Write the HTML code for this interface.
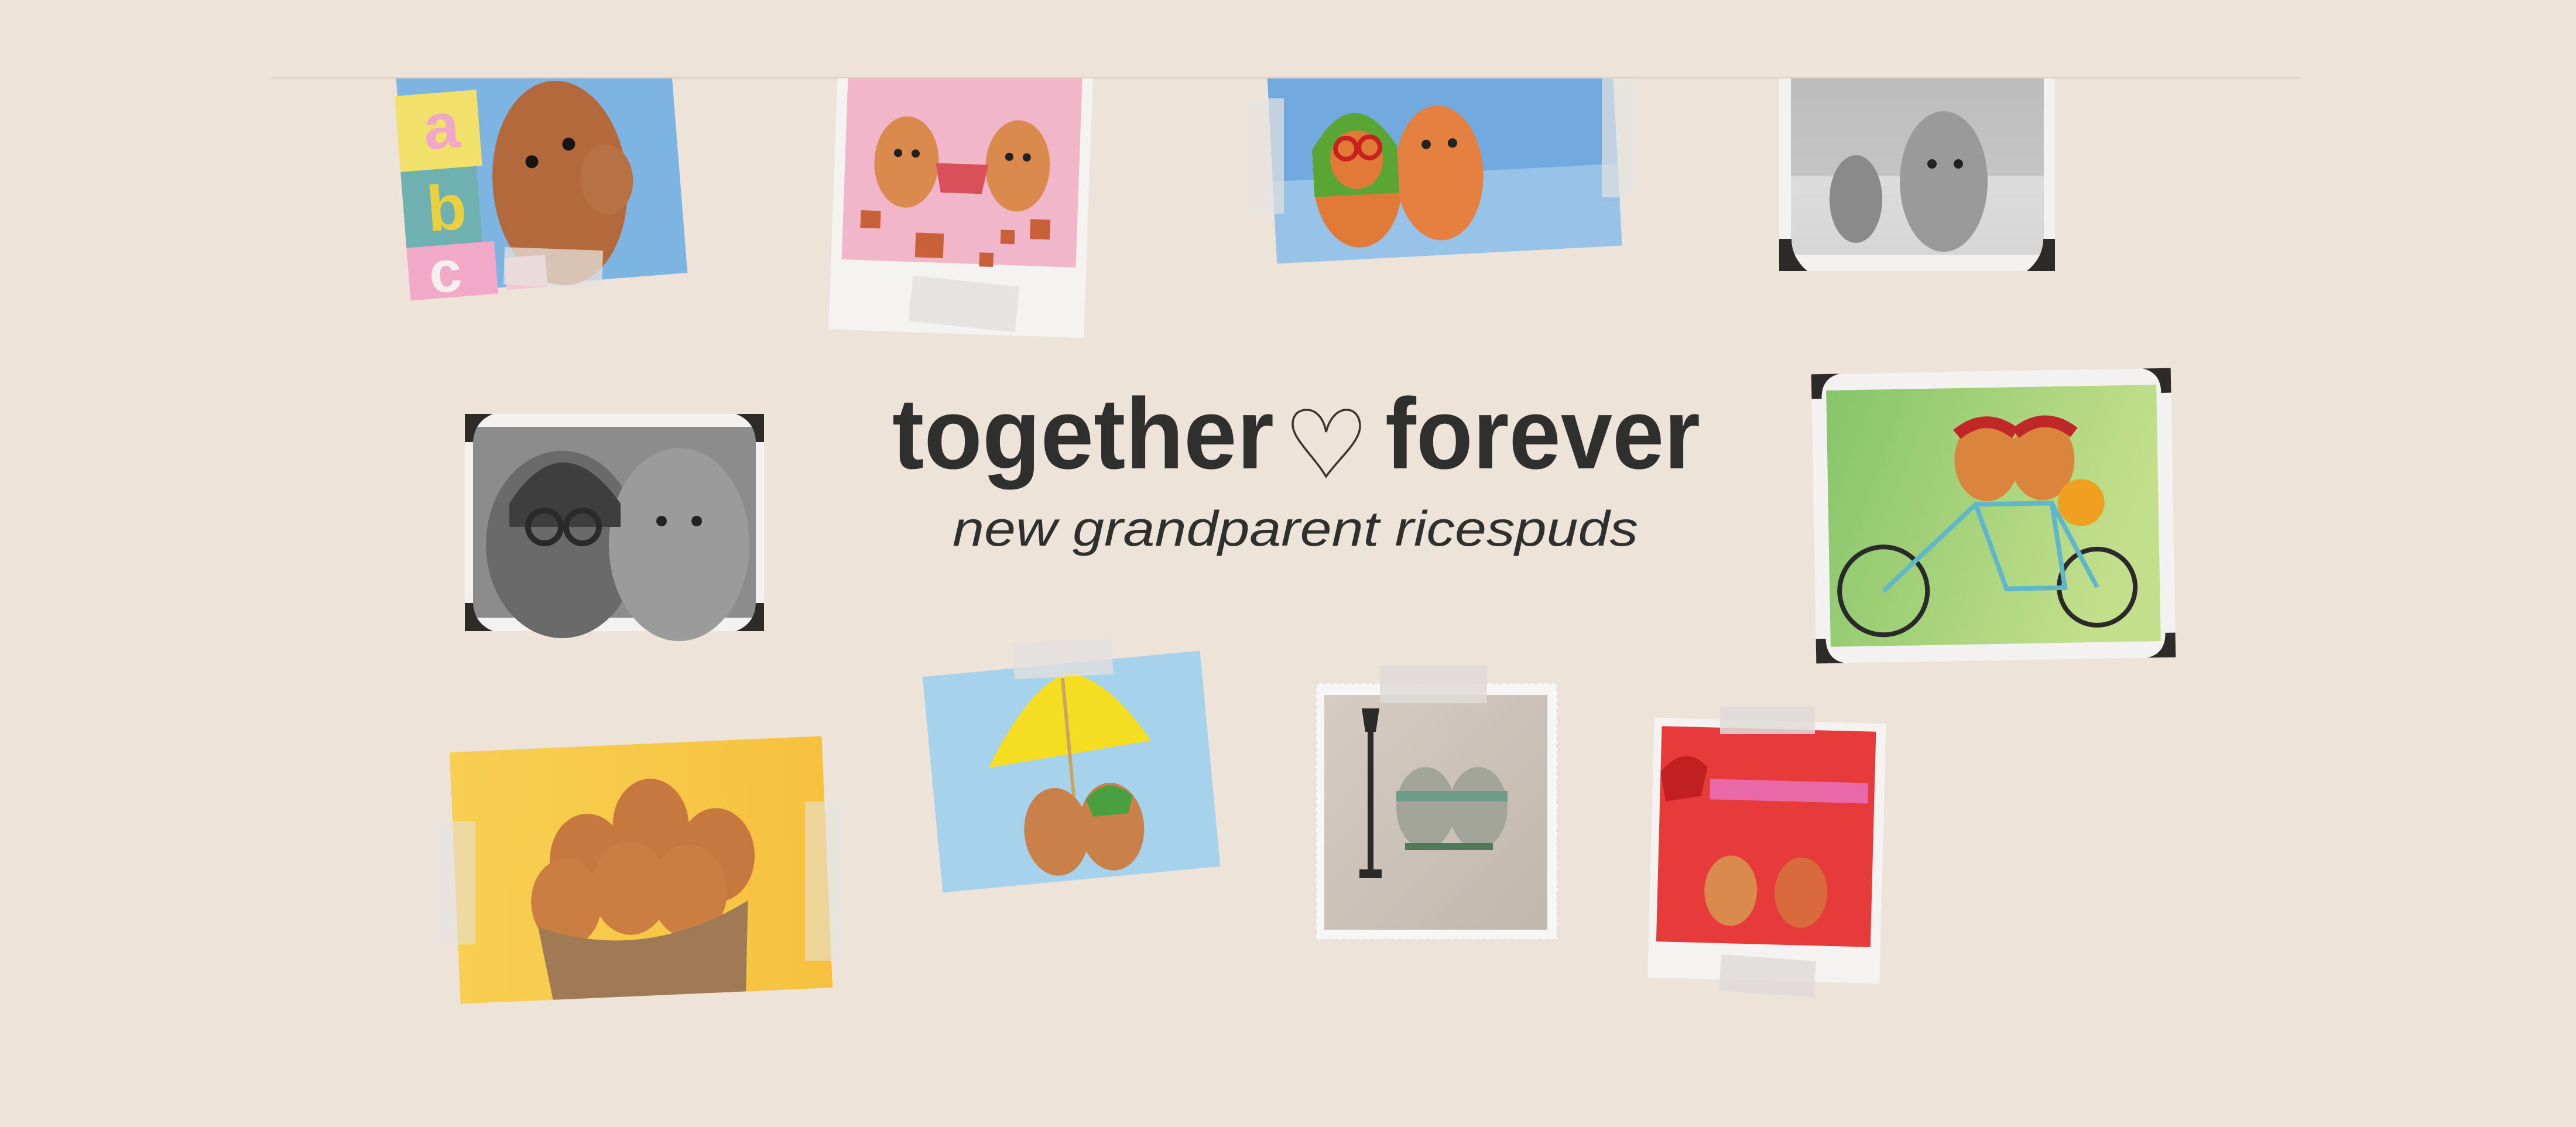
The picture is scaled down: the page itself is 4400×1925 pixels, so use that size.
<!DOCTYPE html>
<html><head><meta charset="utf-8"><style>
html,body{margin:0;padding:0;background:#ede3d9;}
svg{display:block}
</style></head><body>
<svg width="4400" height="1925" viewBox="0 0 4400 1925" xmlns="http://www.w3.org/2000/svg">
<defs>
<clipPath id="top"><rect x="0" y="134" width="4400" height="1800"/></clipPath>
<linearGradient id="grayg" x1="0" y1="0" x2="0" y2="1"><stop offset="0" stop-color="#bdbdbd"/><stop offset="0.55" stop-color="#c4c4c4"/><stop offset="0.56" stop-color="#dcdcdc"/><stop offset="1" stop-color="#d6d6d6"/></linearGradient>
<linearGradient id="greeng" x1="0" y1="0" x2="1" y2="0.3"><stop offset="0" stop-color="#86c56a"/><stop offset="1" stop-color="#c4df8c"/></linearGradient>
<linearGradient id="yelg" x1="0" y1="0" x2="1" y2="0"><stop offset="0" stop-color="#f8cf52"/><stop offset="1" stop-color="#f6c23e"/></linearGradient>
<linearGradient id="lampg" x1="0" y1="0" x2="1" y2="1"><stop offset="0" stop-color="#d6ccc3"/><stop offset="1" stop-color="#c2b7ad"/></linearGradient>
</defs>
<rect width="4400" height="1925" fill="#ede3d9"/>
<line x1="463" y1="133" x2="3928" y2="133" stroke="#dfd2c5" stroke-width="3"/>

<g clip-path="url(#top)">
<g transform="translate(925,295) rotate(-4.5)">
<rect x="-235" y="-200" width="470" height="390" fill="#7db4e2"/>
<rect x="-240" y="-150" width="140" height="130" fill="#f1e06a"/>
<text x="-195" y="-55" font-family="Liberation Sans,sans-serif" font-size="110" font-weight="bold" fill="#f0a8c8">a</text>
<rect x="-240" y="-20" width="130" height="130" fill="#6fb0b0"/>
<text x="-200" y="85" font-family="Liberation Sans,sans-serif" font-size="110" font-weight="bold" fill="#e8d040">b</text>
<rect x="-240" y="110" width="150" height="90" fill="#f2a9c7"/>
<text x="-205" y="190" font-family="Liberation Sans,sans-serif" font-size="100" font-weight="bold" fill="#f5f0f0">c</text>
<ellipse cx="30" cy="20" rx="115" ry="175" fill="#b3693b"/>
<ellipse cx="110" cy="20" rx="45" ry="60" fill="#b87045"/>
<circle cx="-15" cy="-20" r="11" fill="#1a1410"/><circle cx="50" cy="-45" r="11" fill="#1a1410"/>
<path d="M0,-170 L-15,-230 M20,-175 L15,-240 M40,-170 L45,-235" stroke="#7a3d1f" stroke-width="8"/>
<rect x="-75" y="140" width="70" height="55" fill="#f2c8d8"/>
</g>
<rect x="861" y="425" width="168" height="64" fill="#e6e2de" opacity="0.75" transform="rotate(2 945 457)"/>

<g transform="translate(1642,320) rotate(2)">
<rect x="-218" y="-215" width="436" height="465" fill="#f4f3f2"/>
<rect x="-200" y="-215" width="400" height="345" fill="#f2b6cb"/>
<ellipse cx="-95" cy="-40" rx="55" ry="78" fill="#d98a4c"/>
<ellipse cx="95" cy="-40" rx="55" ry="78" fill="#d98a4c"/>
<circle cx="-110" cy="-55" r="7" fill="#222"/><circle cx="-80" cy="-55" r="7" fill="#222"/>
<circle cx="80" cy="-55" r="7" fill="#222"/><circle cx="110" cy="-55" r="7" fill="#222"/>
<path d="M-45,-40 L45,-40 L35,10 L-35,10 Z" fill="#d9505a"/>
<g fill="#c8603a"><rect x="-170" y="45" width="34" height="30"/><rect x="-75" y="80" width="48" height="42"/><rect x="120" y="50" width="34" height="34"/><rect x="70" y="70" width="24" height="24"/><rect x="35" y="110" width="24" height="24"/></g>
</g>
<rect x="1555" y="480" width="183" height="78" fill="#e2e0de" opacity="0.85" transform="rotate(6 1646 519)"/>

<g transform="translate(2468,285) rotate(-3)">
<rect x="-295" y="-170" width="590" height="320" fill="#72aadf"/>
<rect x="-295" y="10" width="590" height="140" fill="#97c3e8"/>
<ellipse cx="-150" cy="20" rx="75" ry="110" fill="#e07a36"/>
<ellipse cx="-10" cy="10" rx="75" ry="115" fill="#e58040"/>
<path d="M-225,-40 Q-150,-160 -80,-40 L-80,40 L-225,40 Z" fill="#5aa534"/>
<ellipse cx="-150" cy="-20" rx="45" ry="50" fill="#e07a36"/>
<path d="M-185,-40 a18,18 0 1,0 36,0 a18,18 0 1,0 -36,0 M-145,-40 a18,18 0 1,0 36,0 a18,18 0 1,0 -36,0" fill="none" stroke="#c92020" stroke-width="8"/>
<circle cx="-30" cy="-40" r="8" fill="#222"/><circle cx="15" cy="-40" r="8" fill="#222"/>
</g>
<rect x="2133" y="168" width="60" height="197" fill="#e4e2e0" opacity="0.7"/>
<rect x="2736" y="133" width="56" height="204" fill="#e4e2e0" opacity="0.7"/>

<rect x="3039" y="133" width="471" height="330" fill="#f3f2f1"/>
<rect x="3059" y="133" width="432" height="302" fill="url(#grayg)"/>
<ellipse cx="3170" cy="340" rx="45" ry="75" fill="#8a8a8a"/>
<ellipse cx="3320" cy="310" rx="75" ry="120" fill="#9a9a9a"/>
<circle cx="3300" cy="280" r="8" fill="#222"/><circle cx="3345" cy="280" r="8" fill="#222"/>
<path d="M3039,408 L3039,463 L3087,463 Q3060,440 3060,408 Z" fill="#2e2a28"/>
<path d="M3510,408 L3510,463 L3462,463 Q3490,440 3490,408 Z" fill="#2e2a28"/>
</g>

<rect x="794" y="707" width="511" height="371" fill="#f3f2f1"/>
<rect x="808" y="729" width="483" height="326" fill="#8c8c8c"/>
<ellipse cx="960" cy="930" rx="130" ry="160" fill="#6a6a6a"/>
<ellipse cx="1160" cy="930" rx="120" ry="165" fill="#9b9b9b"/>
<path d="M870,860 Q960,720 1060,860 L1060,900 L870,900 Z" fill="#3e3e3e"/>
<circle cx="930" cy="900" r="28" fill="none" stroke="#2a2a2a" stroke-width="10"/><circle cx="995" cy="900" r="28" fill="none" stroke="#2a2a2a" stroke-width="10"/>
<circle cx="1130" cy="890" r="9" fill="#222"/><circle cx="1190" cy="890" r="9" fill="#222"/>
<path d="M794,707 L842,707 Q810,720 808,755 L794,755 Z" fill="#2e2a28"/>
<path d="M1305,707 L1257,707 Q1290,720 1291,755 L1305,755 Z" fill="#2e2a28"/>
<path d="M794,1078 L842,1078 Q810,1065 808,1030 L794,1030 Z" fill="#2e2a28"/>
<path d="M1305,1078 L1257,1078 Q1290,1065 1291,1030 L1305,1030 Z" fill="#2e2a28"/>

<g transform="translate(3405,881) rotate(-1)">
<rect x="-307" y="-247" width="614" height="494" fill="#f3f2f1"/>
<rect x="-282" y="-219" width="564" height="438" fill="url(#greeng)"/>
<ellipse cx="-10" cy="-95" rx="55" ry="70" fill="#d9853e"/>
<ellipse cx="85" cy="-95" rx="55" ry="70" fill="#d9853e"/>
<path d="M-60,-140 q50,-40 100,0 M40,-140 q50,-40 100,0" stroke="#c02828" stroke-width="20" fill="none"/>
<circle cx="-190" cy="125" r="75" fill="none" stroke="#2a2a2a" stroke-width="8"/>
<circle cx="175" cy="125" r="65" fill="none" stroke="#2a2a2a" stroke-width="8"/>
<path d="M-190,125 L-30,-20 L100,-20 L175,125 M-30,-20 L20,125 L120,125 L100,-20" stroke="#5fb7c9" stroke-width="8" fill="none"/>
<circle cx="150" cy="-20" r="40" fill="#f0a020"/>
<path d="M-307,-247 L-259,-247 Q-290,-240 -290,-205 L-307,-205 Z" fill="#2e2a28"/>
<path d="M307,-247 L259,-247 Q290,-240 290,-205 L307,-205 Z" fill="#2e2a28"/>
<path d="M-307,247 L-259,247 Q-290,240 -290,205 L-307,205 Z" fill="#2e2a28"/>
<path d="M307,247 L259,247 Q290,240 290,205 L307,205 Z" fill="#2e2a28"/>
</g>

<g transform="translate(1095,1486) rotate(-2.5)">
<rect x="-318" y="-215" width="636" height="430" fill="url(#yelg)"/>
<ellipse cx="-90" cy="-20" rx="65" ry="80" fill="#c7783e"/>
<ellipse cx="20" cy="-75" rx="65" ry="80" fill="#c7783e"/>
<ellipse cx="130" cy="-20" rx="65" ry="80" fill="#c7783e"/>
<ellipse cx="-20" cy="30" rx="65" ry="80" fill="#cc7d42"/>
<ellipse cx="80" cy="40" rx="65" ry="80" fill="#cc7d42"/>
<ellipse cx="-130" cy="50" rx="60" ry="75" fill="#cc7d42"/>
<path d="M-180,90 Q0,160 180,60 L170,215 L-160,215 Z" fill="#a07a55"/>
</g>
<rect x="744" y="1403" width="68" height="210" fill="#e6e4e2" opacity="0.55"/>
<rect x="1375" y="1369" width="62" height="272" fill="#e6e4e2" opacity="0.55"/>

<g transform="translate(1830,1318) rotate(-5.4)">
<rect x="-238" y="-185" width="476" height="370" fill="#a6d3eb"/>
<path d="M-140,-20 Q-60,-150 10,-170 Q80,-150 140,-40 Z" fill="#f5de22"/>
<line x1="0" y1="-160" x2="0" y2="80" stroke="#c9a560" stroke-width="6"/>
<ellipse cx="-35" cy="100" rx="55" ry="75" fill="#c98049"/>
<ellipse cx="60" cy="100" rx="55" ry="75" fill="#c98049"/>
<path d="M20,50 q40,-40 80,0 l-10,30 l-60,0 z" fill="#4aa040"/>
</g>
<rect x="1731" y="1094" width="169" height="62" fill="#e2e0de" opacity="0.8" transform="rotate(-3 1815 1125)"/>

<rect x="2248" y="1167" width="412" height="438" fill="#f7f6f5" stroke="#e4e1de" stroke-width="3" stroke-dasharray="6 6"/>
<rect x="2262" y="1187" width="381" height="401" fill="url(#lampg)"/>
<rect x="2336" y="1240" width="10" height="250" fill="#2c2a28"/>
<path d="M2326,1210 L2356,1210 L2350,1250 L2332,1250 Z" fill="#2c2a28"/>
<rect x="2322" y="1485" width="38" height="15" fill="#2c2a28"/>
<ellipse cx="2435" cy="1380" rx="50" ry="70" fill="#a4a59a"/>
<ellipse cx="2525" cy="1380" rx="50" ry="70" fill="#a4a59a"/>
<path d="M2385,1360 L2480,1360 M2475,1360 L2575,1360" stroke="#6e9c8a" stroke-width="18"/>
<rect x="2400" y="1440" width="150" height="12" fill="#4f7a5a"/>
<rect x="2357" y="1136" width="183" height="65" fill="#dedbd8" opacity="0.85"/>

<g transform="translate(3018,1453) rotate(1.5)">
<rect x="-198" y="-222" width="396" height="444" fill="#f4f3f2"/>
<rect x="-185" y="-208" width="366" height="368" fill="#e63a3b"/>
<rect x="-100" y="-120" width="270" height="35" fill="#e868a8"/>
<path d="M-185,-130 q40,-50 80,-10 l-10,50 l-60,10 z" fill="#c02020"/>
<ellipse cx="-60" cy="70" rx="45" ry="60" fill="#d98a4c"/>
<ellipse cx="60" cy="70" rx="45" ry="60" fill="#d96a3c"/>
</g>
<rect x="2938" y="1207" width="162" height="47" fill="#dedbd8" opacity="0.85"/>
<rect x="2938" y="1636" width="162" height="62" fill="#dedbd8" opacity="0.85" transform="rotate(4 3019 1667)"/>

<text x="1524" y="800" font-family="Liberation Sans,sans-serif" font-weight="bold" font-size="172" fill="#2f2f2d" textLength="652" lengthAdjust="spacingAndGlyphs">together</text>
<path d="M2265,814 C2245,780 2208,750 2208,725 C2208,705 2222,700 2232,700 C2250,700 2262,718 2265,738 C2270,718 2282,700 2300,700 C2314,700 2323,712 2323,728 C2323,755 2285,785 2265,814 Z" fill="none" stroke="#3a3330" stroke-width="3.5"/>
<text x="2366" y="800" font-family="Liberation Sans,sans-serif" font-weight="bold" font-size="172" fill="#2f2f2d" textLength="538" lengthAdjust="spacingAndGlyphs">forever</text>
<text x="1627" y="932" font-family="Liberation Sans,sans-serif" font-style="italic" font-size="84" fill="#2f2f2d" textLength="1171" lengthAdjust="spacingAndGlyphs">new grandparent ricespuds</text>
</svg>
</body></html>
